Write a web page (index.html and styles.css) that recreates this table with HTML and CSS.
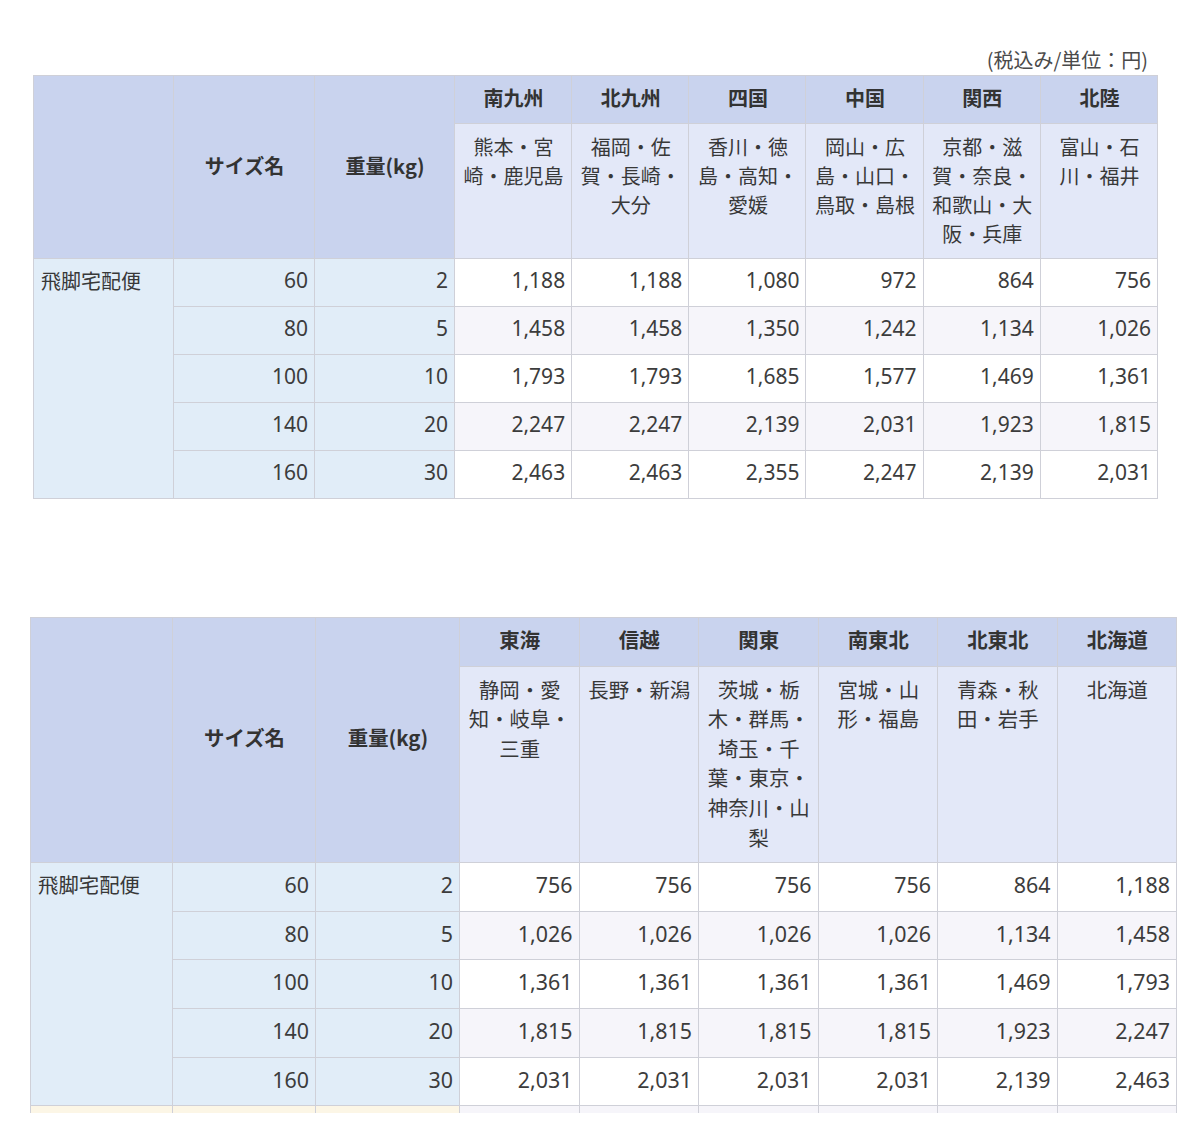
FILE: index.html
```html
<!DOCTYPE html>
<html lang="ja">
<head>
<meta charset="utf-8">
<title>送料表</title>
<link rel="stylesheet" href="styles.css">
</head>
<body>
<div class="page">
  <section class="block block-one">
    <p class="note">(税込み/単位：円)</p>
    <table class="rate">
      <colgroup><col class="c1"><col class="c2"><col class="c3"><col><col><col><col><col><col></colgroup>
      <thead>
        <tr>
          <th class="head" rowspan="2"></th>
          <th class="head" rowspan="2">サイズ名</th>
          <th class="head" rowspan="2">重量(kg)</th>
          <th class="head region">南九州</th>
          <th class="head region">北九州</th>
          <th class="head region">四国</th>
          <th class="head region">中国</th>
          <th class="head region">関西</th>
          <th class="head region">北陸</th>
        </tr>
        <tr>
          <td class="pref">熊本・宮崎・鹿児島</td>
          <td class="pref">福岡・佐賀・長崎・大分</td>
          <td class="pref">香川・徳島・高知・愛媛</td>
          <td class="pref">岡山・広島・山口・鳥取・島根</td>
          <td class="pref">京都・滋賀・奈良・和歌山・大阪・兵庫</td>
          <td class="pref">富山・石川・福井</td>
        </tr>
      </thead>
      <tbody>
        <tr><td class="side carrier" rowspan="5">飛脚宅配便</td><td class="side num">60</td><td class="side num">2</td><td class="val num">1,188</td><td class="val num">1,188</td><td class="val num">1,080</td><td class="val num">972</td><td class="val num">864</td><td class="val num">756</td></tr>
        <tr class="alt"><td class="side num">80</td><td class="side num">5</td><td class="val num">1,458</td><td class="val num">1,458</td><td class="val num">1,350</td><td class="val num">1,242</td><td class="val num">1,134</td><td class="val num">1,026</td></tr>
        <tr><td class="side num">100</td><td class="side num">10</td><td class="val num">1,793</td><td class="val num">1,793</td><td class="val num">1,685</td><td class="val num">1,577</td><td class="val num">1,469</td><td class="val num">1,361</td></tr>
        <tr class="alt"><td class="side num">140</td><td class="side num">20</td><td class="val num">2,247</td><td class="val num">2,247</td><td class="val num">2,139</td><td class="val num">2,031</td><td class="val num">1,923</td><td class="val num">1,815</td></tr>
        <tr><td class="side num">160</td><td class="side num">30</td><td class="val num">2,463</td><td class="val num">2,463</td><td class="val num">2,355</td><td class="val num">2,247</td><td class="val num">2,139</td><td class="val num">2,031</td></tr>
      </tbody>
    </table>
  </section>

  <section class="block block-two">
    <table class="rate rate-two">
      <colgroup><col class="c1"><col class="c2"><col class="c3"><col><col><col><col><col><col></colgroup>
      <thead>
        <tr>
          <th class="head" rowspan="2"></th>
          <th class="head" rowspan="2">サイズ名</th>
          <th class="head" rowspan="2">重量(kg)</th>
          <th class="head region">東海</th>
          <th class="head region">信越</th>
          <th class="head region">関東</th>
          <th class="head region">南東北</th>
          <th class="head region">北東北</th>
          <th class="head region">北海道</th>
        </tr>
        <tr>
          <td class="pref">静岡・愛知・岐阜・三重</td>
          <td class="pref">長野・新潟</td>
          <td class="pref">茨城・栃木・群馬・埼玉・千葉・東京・神奈川・山梨</td>
          <td class="pref">宮城・山形・福島</td>
          <td class="pref">青森・秋田・岩手</td>
          <td class="pref">北海道</td>
        </tr>
      </thead>
      <tbody>
        <tr><td class="side carrier" rowspan="5">飛脚宅配便</td><td class="side num">60</td><td class="side num">2</td><td class="val num">756</td><td class="val num">756</td><td class="val num">756</td><td class="val num">756</td><td class="val num">864</td><td class="val num">1,188</td></tr>
        <tr class="alt"><td class="side num">80</td><td class="side num">5</td><td class="val num">1,026</td><td class="val num">1,026</td><td class="val num">1,026</td><td class="val num">1,026</td><td class="val num">1,134</td><td class="val num">1,458</td></tr>
        <tr><td class="side num">100</td><td class="side num">10</td><td class="val num">1,361</td><td class="val num">1,361</td><td class="val num">1,361</td><td class="val num">1,361</td><td class="val num">1,469</td><td class="val num">1,793</td></tr>
        <tr class="alt"><td class="side num">140</td><td class="side num">20</td><td class="val num">1,815</td><td class="val num">1,815</td><td class="val num">1,815</td><td class="val num">1,815</td><td class="val num">1,923</td><td class="val num">2,247</td></tr>
        <tr><td class="side num">160</td><td class="side num">30</td><td class="val num">2,031</td><td class="val num">2,031</td><td class="val num">2,031</td><td class="val num">2,031</td><td class="val num">2,139</td><td class="val num">2,463</td></tr>
        <tr class="next"><td class="cream">&nbsp;</td><td class="cream">&nbsp;</td><td class="cream">&nbsp;</td><td class="val">&nbsp;</td><td class="val">&nbsp;</td><td class="val">&nbsp;</td><td class="val">&nbsp;</td><td class="val">&nbsp;</td><td class="val">&nbsp;</td></tr>
      </tbody>
    </table>
  </section>
</div>
</body>
</html>
```

FILE: styles.css
```css
html, body {
  margin: 0;
  padding: 0;
  background: #ffffff;
}

body {
  font-family: "Noto Sans CJK JP", "Noto Sans", sans-serif;
  color: #383838;
}

.page {
  padding-top: 45px;
}

.block-one {
  width: 1125px;
  margin-left: 33px;
}

.block-two {
  width: 1147px;
  margin-left: 30px;
  margin-top: 118px;
  height: 496px;
  overflow: hidden;
}

.note {
  margin: 0 0 1px;
  text-align: right;
  font-size: 20px;
  line-height: 29px;
  padding-right: 10px;
  color: #4a4a4a;
}

.rate {
  width: 100%;
  border-collapse: collapse;
  table-layout: fixed;
  font-size: 20px;
  line-height: 29px;
}

.rate-two {
  font-size: 20.4px;
  line-height: 29.6px;
}

.block-one .c1 { width: 140px; }
.block-one .c2 { width: 141px; }
.block-one .c3 { width: 140px; }
.block-two .c1 { width: 142px; }
.block-two .c2 { width: 143px; }
.block-two .c3 { width: 144px; }

.rate th,
.rate td {
  border: 1px solid #cfd0d8;
  padding: 7px 6px 11px 7px;
  overflow: hidden;
}

.rate-two th,
.rate-two td {
  padding-top: 7px;
  padding-bottom: 11px;
}

.head {
  background: #c9d3ee;
  border-color: #d3d9ee;
  font-weight: 700;
  text-align: center;
  vertical-align: middle;
  color: #333333;
}

.region {
  border-color: #d7dcef;
}

.pref {
  background: #e3e8f8;
  border-color: #d3d8e8;
  text-align: center;
  vertical-align: top;
  padding-left: 6px;
  padding-right: 6px;
}

.rate .pref {
  padding-top: 8px;
  padding-bottom: 10px;
}

.side {
  background: #e1edf8;
}

.carrier {
  text-align: left;
  vertical-align: top;
}

.num {
  font-family: "Noto Sans", "Noto Sans CJK JP", sans-serif;
  font-size: 21px;
  color: #3c3c3c;
  text-align: right;
  vertical-align: middle;
}

.rate-two .num {
  font-size: 21.4px;
}

.val {
  background: #ffffff;
}

.alt .val {
  background: #f6f5fa;
}

.cream {
  background: #fcf6e6;
}

.next .val {
  background: #f6f5fa;
}
```
